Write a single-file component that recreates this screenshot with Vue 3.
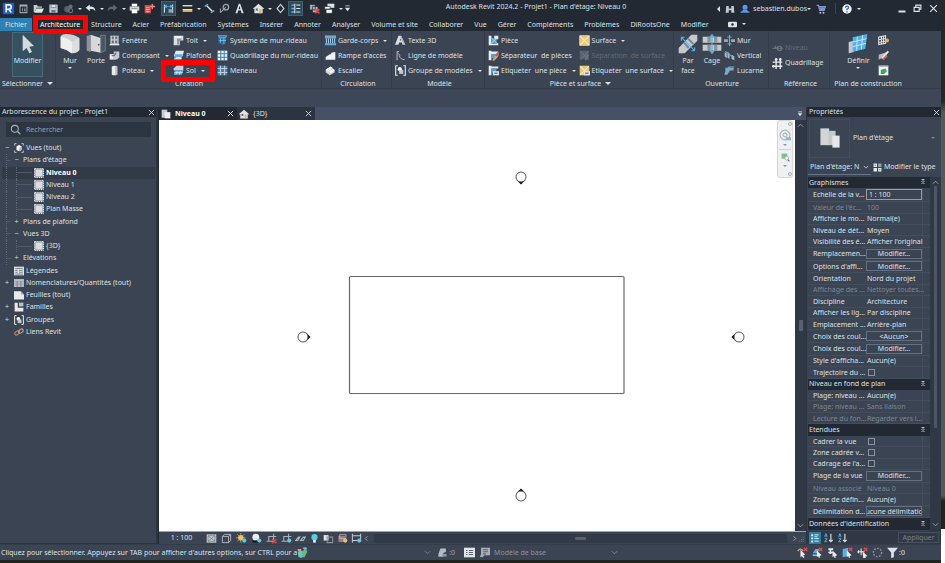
<script setup>
import { h, ref } from 'vue'

const glyphs = {
  logo: '<rect x="1" y="1" width="14" height="14" rx="1" fill="#1a5fd0"/><path d="M5.2 13V3.6h3.6q2.6 0 2.6 2.6T8.6 9H5.4M8.4 9l3 4" fill="none" stroke="#fff" stroke-width="2"/>',
  recent: '<path d="M3 3h10v11H3z" fill="none" stroke="#9ba3ad" stroke-width="1.5"/><path d="M3 3h10v2H3zM6 7h1v5H6zM9 7h2v1H9zM9 9h2v3H9z" fill="#aab1ba"/>',
  open: '<path d="M1 3h5l1 2h6v2H5l-2 6H1z" fill="#c9cdd2"/><path d="M5 8h11l-3 6H2z" fill="#dfe2e6"/>',
  save: '<path d="M2 2h11l1 1v11H2z" fill="#c3c8ce"/><path d="M4 2h8v5H4zM5 10h6v4H5z" fill="#6d7682"/><path d="M5 3h6v3H5z" fill="#dfe2e6"/>',
  sync: '<path d="M2 6l4-2 4 2v6l-4 2-4-2z" fill="#566070"/><circle cx="11" cy="5" r="3" fill="#667080"/><circle cx="11" cy="11" r="3" fill="none" stroke="#667080" stroke-width="1.5"/>',
  undo: '<path d="M1 7l6-5v3c5 0 8 2 8 7-2-3-4-4-8-3v3z" fill="#dfe2e6"/>',
  redo: '<path d="M15 7L9 2v3c-5 0-8 2-8 7 2-3 4-4 8-3v3z" fill="#5d6673"/>',
  print: '<path d="M4 1h8v4H4z" fill="#fff"/><path d="M1 5h14v6H1z" fill="#cfd3d8"/><path d="M4 9h8v6H4z" fill="#fff"/><path d="M4 8h8v1H4z" fill="#59626f"/>',
  pdf: '<path d="M1 3h9v12H1z" fill="#d9534f"/><path d="M11 1h2v3h3v2h-3v3h-2V6H9V4h2z" fill="#f08a86"/><path d="M3 6h5v1H3zM3 9h5v1H3zM3 12h5v1H3z" fill="#f7d9d8"/>',
  measure: '<path d="M2 2v12M14 2v12" stroke="#dfe2e6" stroke-width="1.5"/><path d="M2 5h12M2 5l3-2v4zM14 5l-3-2v4z" stroke="#58b4e8" fill="#58b4e8"/><path d="M8 9h6v5H8z" fill="#9aa2ac"/>',
  dim: '<path d="M1 3h14v2H1z" fill="#dfe2e6"/><path d="M1 9h14v4H1z" fill="#e0b85c"/><path d="M1 9h14v1H1z" fill="#fff"/>',
  line: '<path d="M4 4l8 8" stroke="#dfe2e6" stroke-width="2"/><path d="M1 5l5-3M10 14l5-3" stroke="#58b4e8" stroke-width="2"/>',
  tag: '<circle cx="10" cy="6" r="4" fill="none" stroke="#9ba3ad" stroke-width="1.8"/><path d="M10 6l-8 8M2 8v6" stroke="#9ba3ad" stroke-width="1.5"/>',
  letter: '<path d="M2 15L7 1h2l5 14h-3l-1-4H6l-1 4zM6.7 9h2.6L8 4z" fill="#dfe2e6"/>',
  home: '<path d="M0 8l8-7 8 7-1 1-1-1v7H2V8L1 9z" fill="#dfe2e6"/><path d="M9 9h3v6H9z" fill="#e0b85c"/><path d="M4 8h3v3H4z" fill="#59626f"/>',
  diamond: '<path d="M8 2l5 6-5 6-5-6z" fill="none" stroke="#c3c8ce" stroke-width="1.8"/>',
  thin: '<path d="M2 3h5M2 8h5M2 13h5" stroke="#58b4e8" stroke-width="2"/><path d="M9 3h6M9 8h6M9 13h6M7 1v14" stroke="#dfe2e6" stroke-width="1.5"/>',
  closeWin: '<path d="M1 2h8v8H1zM5 5h8v9H5z" fill="#aab1ba" stroke="#222933"/><path d="M9 9l6 6M15 9l-6 6" stroke="#e8484c" stroke-width="2.4"/>',
  windows: '<path d="M5 1h10v6H5z" fill="#dfe2e6"/><path d="M1 5h8v4H1zM3 9h9v6H3z" fill="#fff" stroke="#222933"/>',
  custom: '<path d="M3 1h10v2H3zM2 6h12l-6 8z" fill="#dfe2e6"/>',
  binocs: '<path d="M2 3h4v4h4V3h4l1 11h-5v-4H6v4H1z" fill="#c3c8ce"/>',
  user: '<circle cx="8" cy="5" r="4" fill="#5c96e8"/><path d="M4 9h8v2l3 1v2H1v-2l3-1z" fill="#5c96e8"/>',
  cart: '<path d="M1 2h3l2 8h7l2-6H5" fill="none" stroke="#8394cf" stroke-width="2"/><path d="M6 5h8l-1 5H7z" fill="#8394cf"/><circle cx="7" cy="14" r="1.5" fill="#c3c8ce"/><circle cx="12" cy="14" r="1.5" fill="#c3c8ce"/>',
  help: '<circle cx="8" cy="8" r="7.5" fill="#f2f4f6"/><path d="M5.5 6q0-2.5 2.5-2.5T10.5 6Q10.500 7.500 8 8.300V10M8 11.400v2" fill="none" stroke="#2a62b4" stroke-width="2"/>',
  min: '<path d="M1 11h14v4H1z" fill="#dfe2e6"/>',
  restore: '<path d="M5 5V2h9v7h-3M2 6h9v7H2z" fill="none" stroke="#dfe2e6" stroke-width="2"/>',
  x: '<path d="M2 2l12 12M14 2L2 14" stroke="currentColor" stroke-width="2"/>',
  cursor: '<path d="M7 1l17 17-7 1 4 8-4 2-4-8-6 5z" fill="#d5d8dc"/>',
  wall: '<path d="M1 3Q3 0 9 0q12 0 20 6v18q-4 5-12 5Q10 23 1 21z" fill="#cdd0d3"/><path d="M1 4q10 1 17 8v17q-7-6-17-8z" fill="#efefef"/><path d="M18 12l11-6v18q-4 5-11 5z" fill="#dcdee0"/>',
  door: '<path d="M1 3l6-2v26l-6-2z" fill="#8b929b"/><path d="M7 1l15 5v22L7 25z" fill="#d7d9db"/><path d="M22 2h7v23l-7 3z" fill="#4b5563" stroke="#8b929b"/><circle cx="19" cy="16" r="1.300" fill="#555"/>',
  window: '<path d="M2 1h12v12H2z" fill="#cdd1d6"/><path d="M4 2h3v4H4zM9 2h3v4H9zM4 8h3v4H4zM9 8h3v4H9z" fill="#66707d"/><path d="M1 13h14v2H1z" fill="#e8eaec"/>',
  component: '<path d="M1 6h6v8H1z" fill="#e8eaec"/><path d="M7 2h8v9q-3 4-8 3z" fill="#c3c8ce"/><path d="M4 8q4 2 6-4" fill="none" stroke="#59626f" stroke-width="1.5"/>',
  column: '<path d="M4 2q4-2 8 0v12q-4 2-8 0z" fill="#e8eaec"/><path d="M9 1l3 1v12l-3 1z" fill="#bcc1c7"/>',
  roof: '<path d="M1 1h14v7h-5v7H1z" fill="#d9dce0"/><path d="M6 5h6v4H9v5H6z" fill="#8d959f"/><path d="M3 3h9" stroke="#fff" stroke-width="2"/>',
  ceiling: '<path d="M4 1h12l-2 8H1z" fill="#e8eaec"/><path d="M3 6h11l-2 8H1z" fill="#58aee6"/><path d="M5 10h6l2 3H3z" fill="#dfe9f0"/>',
  floor: '<path d="M5 1h10v7H1V5z" fill="#cdd1d6"/><path d="M3 8h12l-2 6H1z" fill="#58aee6"/><path d="M6 9l-2 5M11 9l-2 5M2 11h12" stroke="#e8f3fa"/>',
  curtain: '<path d="M2 1h12l-1 11-5 3-6-4z" fill="#2e6da4"/><path d="M2 1h12l-2 3H4zM5 5v6M10 4v9M3 8h10" stroke="#8fc9ee" fill="none"/>',
  grid: '<path d="M1 1h14v14H1z" fill="#f0f2f4"/><path d="M5.500 0v16M10.500 0v16M0 5.500h16M0 10.500h16" stroke="#3a7fb5" stroke-width="1.5"/>',
  mullion: '<path d="M1 1h14v14H1z" fill="#3c86bd"/><path d="M5 1v14M11 1v14M1 5h14M1 11h14" stroke="#c6cbd1" stroke-width="1.500"/>',
  railing: '<path d="M0 2h16v3H0zM0 12h16v3H0z" fill="#58aee6"/><path d="M2 5v7M5 5v7M8 5v7M11 5v7M14 5v7" stroke="#a9cfe9" stroke-width="1.5"/><path d="M0 1h16v1H0z" fill="#e8f3fa"/>',
  ramp: '<path d="M1 10l6-4h2V4l6-1v11H1z" fill="#f0f2f4"/>',
  stair: '<path d="M1 7l7-5 6 5v4l-7 4-6-4z" fill="#cfd3d8"/><path d="M1 7l7-5 3 2-6 5zM6 9l5-3 3 2-6 4z" fill="#fff"/>',
  text3d: '<path d="M0 14L5 1h4l6 13h-4l-1-3H6l-1 3zM7 8h2L8 5z" fill="#d9dce0"/><path d="M9 1l6 13h-2L8 3z" fill="#a4abb4"/>',
  modelLine: '<path d="M3 2v11M2 14h2M3 3l3-1M6 8q2 6 8 6M5 5l2 3" fill="none" stroke="#c3c8ce" stroke-width="1.300"/>',
  group: '<path d="M4 1H1v14h3M12 1h3v14h-3" fill="none" stroke="#e8eaec" stroke-width="1.6"/><circle cx="7" cy="6" r="3" fill="#fff"/><path d="M6 7h6v6H6z" fill="#c3c8ce"/>',
  room: '<path d="M1 1h4v14H1zM9 1h6v5H9zM5 12h10v3H5z" fill="#e8eaec"/><path d="M5 4l8 2-1 7H5z" fill="#4aa3df"/><path d="M5 4l8 8M12 5l-7 7" stroke="#d4ebf8"/>',
  roomSep: '<path d="M1 1h4v14H1zM5 2h10v4H5z" fill="#e8eaec"/><path d="M5 6h9v6H5z" fill="#4aa3df"/><path d="M13 5l3 2-6 8-3 1v-3z" fill="#e8a04c"/><path d="M10 8l4-5 2 2-3 4z" fill="#e8484c"/>',
  roomTag: '<path d="M1 1h4v14H1zM5 2h10v3H5z" fill="#e8eaec"/><path d="M5 5h8l-2 6H5z" fill="#4aa3df"/><path d="M7 9h9v6H7z" fill="#dfe2e6"/><path d="M9 11h5v2H9z" fill="#6d7682"/>',
  area: '<path d="M1 1h14v14H1z" fill="#efc46c"/><path d="M2 2l12 12M14 2L2 14" stroke="#fff2d4" stroke-width="1.5"/><path d="M1 1h14v14H1z" fill="none" stroke="#fff2d4"/>',
  areaSep: '<path d="M1 1h13v12H1z" fill="#565f6d"/><path d="M2 2l12 12M14 2L2 14" stroke="#6a7380" stroke-width="1.500"/><path d="M11 7h4l-4 8H8z" fill="#69727f"/>',
  areaTag: '<path d="M1 1h14v14H1z" fill="#efc46c"/><path d="M2 2l12 12M14 2L2 14" stroke="#fff2d4" stroke-width="1.500"/><path d="M7 9h9v6H7z" fill="#dfe2e6"/><path d="M9 11h5v2H9z" fill="#6d7682"/>',
  byFace: '<path d="M1 21L20 1h9v9L10 29H1z" fill="#c6cacf"/><path d="M9 13l7 8M15 7l8 8" stroke="#7c8591" stroke-width="3"/><path d="M5 5l20 20M5 5h5M5 5v5M25 25h-5M25 25v-5" stroke="#58b4e8" stroke-width="1.6"/>',
  shaft: '<path d="M1 4h28v9H1zM1 16h28v9H1z" fill="#c6cacf"/><path d="M8 4h5v9H8zM18 4h5v9h-5zM8 16h5v9H8zM18 16h5v9h-5z" fill="#8b929b"/><path d="M15 1v28M12 5l3-4 3 4M12 25l3 4 3-4" fill="none" stroke="#58b4e8" stroke-width="1.8"/>',
  openWall: '<path d="M0 6h6v4H0zM10 6h6v4h-6z" fill="#9aa2ac"/><path d="M8 0v16M5 3h6M5 13h6" stroke="#58b4e8" stroke-width="1.4"/>',
  vertical: '<path d="M1 3l3 2v7L1 9zM5 2l3 3v8l-3-2zM11 7l4 2v6l-4-2z" fill="#b4bac2"/><path d="M2 2l12 9" stroke="#58b4e8" stroke-width="1.5"/>',
  dormer: '<path d="M2 4h12v4H8l-3 6H2z" fill="#9aa2ac"/><path d="M1 14L7 3h8M7 3v8" fill="none" stroke="#58b4e8" stroke-width="1.6"/>',
  level: '<circle cx="11" cy="8" r="3" fill="none" stroke="#69727f" stroke-width="2"/><path d="M0 8h16M3 8l2-4 2 4z" stroke="#69727f" fill="#69727f"/>',
  axes: '<path d="M6 2v14M12 2v14M1 6h14M1 12h14" stroke="#e8eaec" stroke-width="2"/><circle cx="6" cy="2" r="2" fill="#e8eaec"/><circle cx="12" cy="2" r="2" fill="#e8eaec"/><circle cx="2" cy="12" r="2" fill="#e8eaec"/>',
  workplane: '<path d="M1 12l8-2v17l-8 2z" fill="#c6cacf"/><path d="M7 5l22-5-3 22-19 5z" fill="#4fb0ea"/><path d="M14 4l-1 21M22 2l-2 21M7 12l21-5M7 19l20-5" stroke="#c8e8fa" stroke-width="1.5"/>',
  wpShow: '<path d="M1 3l10-2v11L1 14zM5 2v11M8 2v11M1 7l10-2M1 11l10-2" fill="none" stroke="#dfe2e6" stroke-width="1.5"/><circle cx="13" cy="8" r="3" fill="#efb04c"/>',
  wpRef: '<path d="M1 7l12-4-3 6-9 5z" fill="#b4bac2"/><path d="M14 1l2 2-8 9-3 1 1-3z" fill="#e8eaec"/><path d="M6 13l6-6 2 2-6 6z" fill="#d6665e"/>',
  wpView: '<path d="M1 1h14v14H1z" fill="#f3f5f4"/><path d="M1 1h14v2H1z" fill="#b4bac2"/><path d="M4 7l7-2 2 4-4 4H4z" fill="#39a860"/>',
  search: '<circle cx="7" cy="7" r="5" fill="none" stroke="#aab1ba" stroke-width="1.5"/><path d="M11 11l4 4" stroke="#aab1ba" stroke-width="1.8"/>',
  views: '<path d="M1 4V1h3M12 1h3v3M15 12v3h-3M4 15H1v-3" fill="none" stroke="#c3c8ce" stroke-width="1.5"/><path d="M4 5l4-2 4 2v6l-4 2-4-2z" fill="#fff"/><path d="M8 7l4-2v6l-4 2z" fill="#bcc1c7"/>',
  plan: '<path d="M2 2h12v12H2z" fill="#d9dce0"/><path d="M1 1h14v14H1z" fill="none" stroke="#fff" stroke-width="1.6" stroke-dasharray="2 1"/>',
  legend: '<path d="M0 1h16v14H0z" fill="#d9dce0"/><path d="M2 4h12M2 7h4M8 7h6M2 10h4M8 10h6M2 13h12" stroke="#6d7682" stroke-width="1.300"/>',
  schedule: '<path d="M0 2h16v12H0z" fill="#d9dce0"/><path d="M0 5h16M0 8h16M0 11h16M5 5v9M11 5v9" stroke="#59626f"/>',
  sheet: '<path d="M0 2h11l5 5v8H0z" fill="#e8e9eb"/><path d="M11 2v5h5z" fill="#a4abb4"/>',
  family: '<path d="M1 1h5v8h9v6H1z" fill="#e8e9eb"/><path d="M8 1h7v6H8z" fill="#bcc1c7"/>',
  link: '<rect x="1" y="7" width="8" height="5" rx="2.500" transform="rotate(-35 5 9.500)" fill="none" stroke="#d08a5a" stroke-width="1.6"/><rect x="7" y="4" width="8" height="5" rx="2.500" transform="rotate(-35 11 6.500)" fill="none" stroke="#dca27a" stroke-width="1.6"/>',
  sheets: '<path d="M1 1h9v13H1z" fill="#c9cbcf"/><path d="M6 5h9v10H6z" fill="#eceded"/>',
  planBig: '<path d="M3 3h11v21H3z" fill="#d3d5d7"/><path d="M13 6h9v18h-9z" fill="#c6c8cb"/><path d="M18 12h9v15h-9z" fill="#e6e7e8"/>',
  typeEdit: '<path d="M1 1h6v6H1zM1 9h6v6H1zM9 9h6v6H9z" fill="#e8eaec"/><path d="M9 1h6v6H9z" fill="#9aa2ac"/><path d="M3 3h2v2H3zM11 11h2v2h-2z" fill="#59626f"/>',
  wheel: '<circle cx="8" cy="8" r="6.500" fill="none" stroke="#a9b3c0" stroke-width="1.600"/><circle cx="8" cy="8" r="2.500" fill="none" stroke="#a9b3c0" stroke-width="1.500"/><path d="M9 11h7v4H9z" fill="#8fb4da"/>',
  zoomRegion: '<path d="M1 1h10v9H1z" fill="#7fbf86"/><circle cx="10" cy="9" r="3.500" fill="#e9f3ea" stroke="#8a939e"/><path d="M12 12l3 3" stroke="#6b7480" stroke-width="2"/>',
  detail: '<path d="M1 2h14v12H1z" fill="#c9cdd2"/><path d="M3 4h10v8H3zM3 4l10 8M13 4L3 12" fill="none" stroke="#6d7682"/>',
  cube: '<path d="M2 5h9v9H2zM2 5l3-3h9v9l-3 3M11 5l3-3" fill="none" stroke="#b4bac2" stroke-width="1.300"/>',
  sun: '<circle cx="7" cy="7" r="4" fill="#f0bd62"/><path d="M7 0v14M0 7h14M2 2l10 10M12 2L2 12" stroke="#f0bd62"/><circle cx="12" cy="11" r="3" fill="#56cfe0"/>',
  shadow: '<circle cx="7" cy="6" r="5" fill="#eceded"/><path d="M2 11h10v3H2z" fill="#16191e"/><circle cx="12" cy="11" r="3" fill="#56cfe0"/>',
  cropOff: '<path d="M4 12V5h11M1 12h10V1" fill="none" stroke="#a9b0b9" stroke-width="1.6"/><path d="M9 9l6 6M15 9l-6 6" stroke="#e8484c" stroke-width="2"/>',
  crop: '<path d="M4 12V5h11M1 12h10V1" fill="none" stroke="#a9b0b9" stroke-width="1.6"/><circle cx="12" cy="11" r="3" fill="#56cfe0"/>',
  glasses: '<path d="M1 11l4-5h2l-3 5zM8 11l4-5h3l-3 5z" fill="none" stroke="#b4bac2" stroke-width="1.6"/>',
  bulb: '<circle cx="8" cy="6" r="4.500" fill="#56cfe0"/><path d="M6 10h4v4H6z" fill="#e8eaec"/>',
  copy: '<path d="M1 3h7v8H1z" fill="#dfe2e6"/><path d="M6 6h8v8H6z" fill="none" stroke="#8b929b" stroke-width="1.500"/>',
  analysis: '<path d="M2 4h10v9H2z" fill="#a07b80"/><path d="M4 2h9v6H4z" fill="none" stroke="#c3c8ce"/><circle cx="12" cy="11" r="3" fill="#f0bd62"/>',
  constraint: '<path d="M2 1v13M14 1v8M2 4h12M2 11h7" stroke="#c3c8ce" stroke-width="1.500"/><circle cx="12" cy="11" r="3" fill="#56cfe0"/>',
  left: '<path d="M10 3L5 8l5 5" fill="none" stroke="currentColor" stroke-width="2"/>',
  right: '<path d="M6 3l5 5-5 5" fill="none" stroke="currentColor" stroke-width="2"/>',
  up: '<path d="M2 11l6-6 6 6" fill="none" stroke="currentColor" stroke-width="2"/>',
  down: '<path d="M2 5l6 6 6-6" fill="none" stroke="currentColor" stroke-width="2"/>',
  pin: '<path d="M5 8l3-3 3 3M5 12l3-3 3 3M5 3h6" fill="none" stroke="#dfe2e6" stroke-width="1.6"/>',
  grip: '<path d="M11 5h2v2h-2zM7 9h2v2H7zM11 9h2v2h-2zM3 13h2v2H3zM7 13h2v2H7zM11 13h2v2h-2z" fill="#8b929b"/>',
  press: '<path d="M1 7l5-2 3 2v7l-3 2-4-2z" fill="#58c9d8"/><path d="M7 6l6-3 2 4-4 8H8z" fill="#6cb678"/><path d="M1 3h5v3H1z" fill="#e09b7b"/><path d="M8 1l5-1 2 3-4 2z" fill="#73a8e8"/>',
  workset: '<path d="M5 2h8v5l-4 2v5H2v-4z" fill="#b4bac2"/><path d="M8 10h6v4H8z" fill="#8b929b"/>',
  list: '<path d="M0 1h16v14H0z" fill="#e3e5e8"/><path d="M3 5h2M3 8h2M3 11h2M7 5h6M7 8h6M7 11h6" stroke="#59626f" stroke-width="1.500"/>',
  listFar: '<path d="M3 1h13v11H8l-3 3-4-1 2-3z" fill="#a9b0b9"/><path d="M6 4h7M6 7h7M6 10h4" stroke="#59626f" stroke-width="1.500"/>',
  selLink: '<path d="M1 6q4-6 8 0" fill="none" stroke="#d89a72" stroke-width="2"/><path d="M5 4l7 7-3 1 2 3-2 1-2-3-2 2z" fill="#e8eaec"/><path d="M10 1l5 5M15 1l-5 5" stroke="#e8484c" stroke-width="2"/>',
  selUnder: '<path d="M1 9l4-6h6L8 9z" fill="#58aee6"/><path d="M7 5l7 7-3 1 1 2-2 1-1-3-2 2z" fill="#e8eaec"/><path d="M1 12h6" stroke="#c3c8ce" stroke-width="2"/><path d="M10 1l5 5M15 1l-5 5" stroke="#e8484c" stroke-width="2"/>',
  selPin: '<path d="M2 3h7M5 3v7M2 8h7" stroke="#e8eaec" stroke-width="2.500"/><path d="M8 5l7 7-3 1 1 2-2 1-1-3-2 2z" fill="#e8eaec"/>',
  selFace: '<path d="M1 3l8-2v12l-8 2z" fill="#58aee6"/><path d="M7 5l7 7-3 1 1 2-2 1-1-3-2 2z" fill="#e8eaec"/><path d="M10 1l5 5M15 1l-5 5" stroke="#e8484c" stroke-width="2"/>',
  drag: '<path d="M1 7h10M6 2v10M1 7l2-2M1 7l2 2" stroke="#e8eaec" stroke-width="1.500"/><path d="M8 6l7 7-3 1 1 2H9z" fill="#e8eaec"/><path d="M10 1l5 5M15 1l-5 5" stroke="#e8484c" stroke-width="2"/>',
  busy: '<circle cx="8" cy="8" r="6" fill="none" stroke="#8b929b" stroke-width="2" stroke-dasharray="2.500 2"/>',
  filter: '<path d="M0 1h16l-6 7v7l-4 1V8z" fill="#dfe2e6"/>',
  sortA: '<path d="M1 6l2-5 2 5M2 5h2M1 9h4l-4 5h4" stroke="#58b4e8" stroke-width="1.500" fill="none"/><path d="M11 1v13M8 11l3 3 3-3" stroke="#dfe2e6" stroke-width="1.800" fill="none"/>',
  categories: '<path d="M2 2h3v3H2zM2 7h3v3H2zM2 12h3v3H2z" fill="#dff1fa"/><path d="M7 3h7M7 6h5M7 9h7M7 13h7" stroke="#dff1fa" stroke-width="1.500"/>',
  pill: '<rect x="0" y="3" width="16" height="10" rx="2" fill="#dfe2e6"/><circle cx="8" cy="8" r="2.200" fill="#222933"/>'
}
const Ico = (p) => h('svg', {
  viewBox: p.big ? '0 0 30 30' : '0 0 16 16', 'aria-hidden': 'true', innerHTML: glyphs[p.n]
})
Ico.props = { n: String, big: Boolean }

const quick = ['logo', 'recent', 'open', 'save', 'sync', 'v', 'undo', 'v', 'redo', 'v', 'print', 'pdf', '|', '*measure', '|',
  'dim', 'v', 'line', 'tag', 'letter', '|', 'home', 'v', 'diamond', '*thin', '|', 'closeWin', 'windows', 'v']
const tabs = ['Architecture', 'Structure', 'Acier', 'Préfabrication', 'Systèmes', 'Insérer', 'Annoter', 'Analyser',
  'Volume et site', 'Collaborer', 'Vue', 'Gérer', 'Compléments', 'Problèmes', 'DiRootsOne', 'Modifier']

const t = (icon, text, menu = false, off = false) => ({ icon, text, menu, off })
const panels = [
  { cls: 'select', title: 'Sélectionner', more: true, big: [{ icon: 'cursor', text: 'Modifier', on: true }], cols: [] },
  { cls: 'create', title: 'Création', big: [{ icon: 'wall', text: 'Mur', menu: true }, { icon: 'door', text: 'Porte' }],
    cols: [
      [t('window', 'Fenêtre'), t('component', 'Composant', true), t('column', 'Poteau', true)],
      [t('roof', 'Toit', true), t('ceiling', 'Plafond'), t('floor', 'Sol', true)],
      [t('curtain', 'Système de mur-rideau'), t('grid', 'Quadrillage du mur-rideau'), t('mullion', 'Meneau')]] },
  { cls: 'circ', title: 'Circulation', big: [],
    cols: [[t('railing', 'Garde-corps', true), t('ramp', "Rampe d'accès"), t('stair', 'Escalier')]] },
  { cls: 'model', title: 'Modèle', big: [],
    cols: [[t('text3d', 'Texte 3D'), t('modelLine', 'Ligne de modèle'), t('group', 'Groupe de modèles', true)]] },
  { cls: 'rooms', title: 'Pièce et surface', more: true, big: [],
    cols: [
      [t('room', 'Pièce'), t('roomSep', 'Séparateur  de pièces'), t('roomTag', 'Etiqueter  une pièce', true)],
      [t('area', 'Surface', true), t('areaSep', 'Séparation  de surface', false, true), t('areaTag', 'Etiqueter  une surface', true)]] },
  { cls: 'opening', title: 'Ouverture', big: [{ icon: 'byFace', text: 'Par face' }, { icon: 'shaft', text: 'Cage' }],
    cols: [[t('openWall', 'Mur'), t('vertical', 'Vertical'), t('dormer', 'Lucarne')]] },
  { cls: 'datum', title: 'Référence', big: [], cols: [[t('level', 'Niveau', false, true), t('axes', 'Quadrillage')]] },
  { cls: 'wplane', title: 'Plan de construction', big: [{ icon: 'workplane', text: 'Définir', menu: true }],
    cols: [[t('wpShow', ''), t('wpRef', ''), t('wpView', '')]] }
]

const tree = [
  { lv: 1, sign: '−', icon: 'views', text: 'Vues (tout)' },
  { lv: 2, sign: '−', text: "Plans d'étage" },
  { lv: 3, icon: 'plan', text: 'Niveau 0', on: true },
  { lv: 3, icon: 'plan', text: 'Niveau 1' },
  { lv: 3, icon: 'plan', text: 'Niveau 2' },
  { lv: 3, icon: 'plan', text: 'Plan Masse' },
  { lv: 2, sign: '+', text: 'Plans de plafond' },
  { lv: 2, sign: '−', text: 'Vues 3D' },
  { lv: 3, icon: 'plan', text: '{3D}' },
  { lv: 2, sign: '+', text: 'Elévations' },
  { lv: 1, icon: 'legend', text: 'Légendes' },
  { lv: 1, sign: '+', icon: 'schedule', text: 'Nomenclatures/Quantités (tout)' },
  { lv: 1, icon: 'sheet', text: 'Feuilles (tout)' },
  { lv: 1, sign: '+', icon: 'family', text: 'Familles' },
  { lv: 1, sign: '+', icon: 'group', text: 'Groupes' },
  { lv: 1, icon: 'link', text: 'Liens Revit' }
]

const props = [
  { head: 'Graphismes' },
  { k: 'Echelle de la v...', v: '1 : 100', type: 'input' },
  { k: "Valeur de l'éc...", v: '100', off: true },
  { k: 'Afficher le mo...', v: 'Normal(e)' },
  { k: 'Niveau de dét...', v: 'Moyen' },
  { k: 'Visibilité des é...', v: "Afficher l'original" },
  { k: 'Remplacemen...', v: 'Modifier...', type: 'button' },
  { k: "Options d'affi...", v: 'Modifier...', type: 'button' },
  { k: 'Orientation', v: 'Nord du projet' },
  { k: 'Affichage des ...', v: 'Nettoyer toutes...', off: true },
  { k: 'Discipline', v: 'Architecture' },
  { k: 'Afficher les lig...', v: 'Par discipline' },
  { k: 'Emplacement ...', v: 'Arrière-plan' },
  { k: 'Choix des coul...', v: '<Aucun>', type: 'button' },
  { k: 'Choix des coul...', v: 'Modifier...', type: 'button' },
  { k: "Style d'afficha...", v: 'Aucun(e)' },
  { k: 'Trajectoire du ...', type: 'check' },
  { head: 'Niveau en fond de plan' },
  { k: 'Plage: niveau ...', v: 'Aucun(e)' },
  { k: 'Plage: niveau ...', v: 'Sans liaison', off: true },
  { k: 'Lecture du fon...', v: 'Regarder vers l...', off: true },
  { head: 'Etendues' },
  { k: 'Cadrer la vue', type: 'check' },
  { k: 'Zone cadrée v...', type: 'check' },
  { k: "Cadrage de l'a...", type: 'check' },
  { k: 'Plage de la vue', v: 'Modifier...', type: 'button' },
  { k: 'Niveau associé', v: 'Niveau 0', off: true },
  { k: 'Zone de défin...', v: 'Aucun(e)' },
  { k: 'Délimitation d...', v: 'Aucune délimitation', type: 'button' },
  { head: "Données d'identification" }
]
const viewIcons = ['detail', 'cube', 'sun', 'shadow', 'cropOff', 'crop', 'glasses', 'bulb', 'copy', 'analysis', 'constraint']
const selIcons = ['selLink', 'selUnder', 'selPin', 'selFace', 'drag', 'busy']
const query = ref('')
</script>

<template>
  <div class="app">
    <header class="titlebar">
      <div class="quick">
        <template v-for="(q, i) in quick" :key="i">
          <i v-if="q === 'v'" class="slot-arrow"><b class="caret" /></i>
          <i v-else-if="q === '|'" class="slot-gap" />
          <button v-else class="slot" :class="{ pressed: q[0] === '*' }"><Ico :n="q.replace('*', '')" :class="q === 'logo' ? 'i13' : 'i11'" /></button>
        </template>
        <button class="slot-arrow"><Ico n="custom" class="i7" /></button>
      </div>
      <h1>Autodesk Revit 2024.2 - Projet1 - Plan d'étage: Niveau 0</h1>
      <div class="account">
        <b class="caret back" />
        <button><Ico n="binocs" class="i10" /></button>
        <button class="user"><Ico n="user" class="i10" />sebastien.dubos<b class="caret" /></button>
        <button><Ico n="cart" class="i10" /></button>
        <i class="rule" />
        <button><Ico n="help" class="i10" /></button>
        <b class="caret" />
      </div>
      <div class="wincontrols">
        <button><Ico n="min" class="i8" /></button>
        <button><Ico n="restore" class="i9" /></button>
        <button><Ico n="x" class="i9" /></button>
      </div>
    </header>

    <nav class="tabs">
      <a href="#" class="file">Fichier</a>
      <a v-for="(name, i) in tabs" :key="name" href="#" :class="{ current: i === 0 }">{{ name }}<i v-if="i === 0" class="mark mark-tab" /></a>
      <button class="pillbtn"><Ico n="pill" class="i9" /><b class="caret" /></button>
    </nav>

    <section class="ribbon">
      <div v-for="p in panels" :key="p.title" class="panel" :class="p.cls">
        <div class="tools">
          <button v-for="b in p.big" :key="b.text" class="big" :class="{ on: b.on }">
            <Ico :n="b.icon" :big="true" class="i20" /><span>{{ b.text }}</span><b v-if="b.menu" class="caret" />
          </button>
          <div v-for="(c, ci) in p.cols" :key="ci" class="col">
            <button v-for="b in c" :key="b.icon" class="tool" :class="{ off: b.off }" :disabled="b.off">
              <Ico :n="b.icon" class="i11" /><span v-if="b.text">{{ b.text }}</span><b v-if="b.menu" class="caret" />
              <i v-if="b.icon === 'floor'" class="mark mark-tool" />
            </button>
          </div>
        </div>
        <div class="ptitle">{{ p.title }}<b v-if="p.more" class="caret wide" /></div>
      </div>
    </section>

    <main class="work">
      <aside class="browser">
        <div class="bar"><h2>Arborescence du projet - Projet1</h2><button><Ico n="x" class="i7" /></button></div>
        <label class="search"><Ico n="search" class="i11" /><input v-model="query" type="text" placeholder="Rechercher" aria-label="Rechercher"></label>
        <ul class="tree">
          <li v-for="(r, i) in tree" :key="i" :class="['lv' + r.lv, { on: r.on }]">
            <i v-if="r.lv > 1" class="guide" :class="{ plain: r.lv === 3 }" />
            <i v-if="r.lv === 3" class="guide deep" />
            <span v-if="r.lv < 3" class="sign">{{ r.sign }}</span>
            <Ico v-if="r.icon" :n="r.icon" class="i10" />
            <span>{{ r.text }}</span>
          </li>
        </ul>
      </aside>

      <section class="center">
        <div class="doctabs">
          <div class="doctab active"><Ico n="sheets" class="i10" /><span>Niveau 0</span><button><Ico n="x" class="i7" /></button></div>
          <div class="doctab"><Ico n="home" class="i10" /><span>{3D}</span><button><Ico n="x" class="i7" /></button></div>
          <button class="tabmenu"><Ico n="custom" class="i6" /></button>
        </div>
        <div class="viewport">
          <div class="canvas">
            <svg viewBox="0 0 636 411" class="drawing">
              <rect x="190.500" y="156.500" width="274.500" height="117" rx="1" fill="none" stroke="#686868" stroke-width="1.200" />
              <g v-for="m in [[362, 57, 0], [144, 217, -90], [580, 217, 90], [362, 376, 180]]" :key="m.join()" :transform="`translate(${m[0]} ${m[1]}) rotate(${m[2]})`">
                <path d="M-4.500 3L0 7.500L4.500 3z" fill="#000" />
                <circle r="5" fill="#fff" stroke="#555" />
              </g>
            </svg>
            <div class="navbar">
              <i class="dot" /><Ico n="wheel" class="i12" /><b class="caret" /><hr><Ico n="zoomRegion" class="i9" /><b class="caret" /><i class="dot last" />
            </div>
          </div>
          <div class="vscroll"><Ico n="up" class="i7" /><i class="thumb" /><Ico n="down" class="i7" /></div>
        </div>
        <div class="viewbar">
          <button class="scale">1 : 100</button>
          <button v-for="v in viewIcons" :key="v" class="vbtn"><Ico :n="v" class="i11" /></button>
          <Ico n="left" class="i7" />
          <div class="hscroll"><i class="thumb flat" /></div>
          <Ico n="right" class="i7" />
          <Ico n="grip" class="i7" />
        </div>
      </section>

      <aside class="properties">
        <div class="bar"><h2>Propriétés</h2><button><Ico n="x" class="i7" /></button></div>
        <div class="ptype"><div class="thumbbox"><Ico n="planBig" :big="true" class="i22" /></div><span>Plan d'étage</span><b class="caret dim" /></div>
        <div class="pinst">
          <button class="inst">Plan d'étage: N<Ico n="down" class="i6" /></button>
          <button class="edit"><Ico n="typeEdit" class="i9" />Modifier le type</button>
        </div>
        <div class="pbody">
          <table>
            <colgroup><col class="ck"><col class="cv"><col class="ct"></colgroup>
            <tbody>
              <tr v-for="(r, i) in props" :key="i" :class="{ off: r.off }">
                <template v-if="r.head"><th colspan="2">{{ r.head }}</th><th><Ico n="pin" class="i8" /></th></template>
                <template v-else>
                  <td class="key"><label :for="'p' + i">{{ r.k }}</label></td>
                  <td class="val">
                    <input v-if="r.type === 'input'" :id="'p' + i" type="text" :value="r.v">
                    <button v-else-if="r.type === 'button'" :id="'p' + i"><span>{{ r.v }}</span></button>
                    <input v-else-if="r.type === 'check'" :id="'p' + i" type="checkbox">
                    <output v-else :id="'p' + i">{{ r.v }}</output>
                  </td>
                  <td />
                </template>
              </tr>
            </tbody>
          </table>
          <div class="pscroll"><Ico n="up" class="i7" /><i class="track" /><Ico n="down" class="i7" /></div>
        </div>
        <div class="pfoot">
          <button class="sort on"><Ico n="categories" class="i10" /></button>
          <button class="sort"><Ico n="sortA" class="i10" /></button>
          <button class="sort"><Ico n="sortA" class="i10" /></button>
          <button class="apply" disabled>Appliquer</button>
        </div>
      </aside>
    </main>

    <footer class="status">
      <span class="hint">Cliquez pour sélectionner. Appuyez sur TAB pour afficher d'autres options, sur CTRL pour a</span>
      <Ico n="press" class="i11" />
      <div class="worksets"><Ico n="down" class="i7" /></div>
      <button class="count"><Ico n="workset" class="i11" />:0</button>
      <button class="lists"><Ico n="list" class="i11" /></button>
      <button class="lists"><Ico n="listFar" class="i11" /></button>
      <div class="options">
        <select aria-label="Variante"><option>Modèle de base</option></select><Ico n="down" class="i7" />
      </div>
      <div class="selection">
        <button v-for="s in selIcons" :key="s"><Ico :n="s" class="i11" /></button>
        <button class="count lit"><Ico n="filter" class="i11" />:0</button>
      </div>
    </footer>
  </div>
</template>

<style>
body { margin: 0; background: #20241f; }
</style>

<style scoped>
.app {
  box-sizing: border-box; min-height: 100vh; display: flex; flex-direction: column; padding: 0 4px 3px 0;
  font: 7px/10px "Noto Sans", "Open Sans", sans-serif; color: #dde0e5;
  background: linear-gradient(#252729 18%, #55585a 20%, #55585a 88%, #20241f 89%, #20241f 94%, #fff 94%) right / 4px 100% no-repeat, #20241f;
}
.app * { box-sizing: border-box; }
button, input, select { font: inherit; color: inherit; background: none; border: 0; padding: 0; margin: 0; }
button { display: flex; align-items: center; justify-content: center; white-space: nowrap; }
a { color: inherit; text-decoration: none; }
h1, h2 { font: inherit; margin: 0; white-space: nowrap; }
svg { flex: none; display: block; }
.i6 { width: 6px; height: 6px; }
.i7 { width: 7px; height: 7px; }
.i8 { width: 8px; height: 8px; }
.i9 { width: 9px; height: 9px; }
.i10 { width: 10px; height: 10px; }
.i11 { width: 11px; height: 11px; }
.i12 { width: 12px; height: 12px; }
.i13 { width: 13px; height: 13px; }
.i20 { width: 20px; height: 20px; }
.i22 { width: 24px; height: 24px; }
.caret { display: block; flex: none; border: 2px solid transparent; border-top-color: currentColor; border-bottom: 0; }
.caret.wide { border-width: 3px 3px 0; }
.caret.back { border: 3px solid transparent; border-right-color: currentColor; border-left: 0; }
.caret.dim { color: #7d8794; }

.titlebar { display: flex; align-items: center; height: 17px; background: #222933; }
.quick { display: flex; align-items: center; padding-left: 1px; }
.slot { width: 15px; height: 15px; }
.slot.pressed { background: #2c4a5c; border: 1px solid #3d6175; }
.slot-arrow { width: 7px; display: flex; justify-content: center; }
.slot-gap { width: 4px; }
.titlebar h1 { flex: 1; text-align: center; line-height: 12px; padding: 0 0 3px 4px; }
.account { display: flex; align-items: center; gap: 5px; }
.user { gap: 3px; }
.user .caret { margin-left: -3px; }
.rule { width: 1px; height: 11px; background: #3b4453; margin: 0 1px 0 4px; }
.wincontrols { display: flex; align-items: center; gap: 7px; padding: 0 3px 0 37px; }

.tabs { display: flex; align-items: center; gap: 11px; height: 14px; background: #222933; }
.tabs a { position: relative; line-height: 13px; white-space: nowrap; }
.tabs .file { background: #2d80b4; width: 32px; text-align: center; margin-right: -3px; }
.tabs .current { color: #fff; }
.pillbtn { gap: 5px; margin-left: 8px; }
.mark { position: absolute; border: 5px solid #fe0000; z-index: 2; pointer-events: none; }
.mark-tab { inset: -3px -8px -3px -7px; }
.mark-tool { inset: -3px -10px -4px -12px; }

.ribbon { display: flex; height: 58px; background: #3b4453; border-bottom: 1px solid #343c4a; box-shadow: 0 18px 0 #3e4757; margin-bottom: 18px; }
.panel { display: flex; flex-direction: column; justify-content: space-between; padding-top: 1px; border-right: 1px solid #343c4a; }
.tools { display: flex; height: 46px; }
.ptitle { display: flex; justify-content: center; align-items: center; gap: 4px; height: 9px; white-space: nowrap; }
.col { display: flex; flex-direction: column; justify-content: center; padding-top: 1px; }
.tool { position: relative; height: 15px; justify-content: flex-start; gap: 2px; align-self: flex-start; white-space: pre; }
.tool .caret { margin-left: 3px; }
.tool.off { color: #626c7a; }
.big { flex-direction: column; justify-content: flex-start; height: 45px; padding-top: 2px; white-space: normal; }
.big .caret { margin-top: 1px; }
.big span { padding-top: 2px; }
.big.on { background: #35505f; border: 1px solid #48697b; width: 31px; padding-top: 1px; }
.select { width: 56px; }
.select .tools { justify-content: center; }
.create { width: 266px; padding-left: 1px; }
.create .big { width: 26px; }
.create .col:nth-of-type(1) { width: 64px; }
.create .col:nth-of-type(2) { width: 44px; }
.circ { width: 70px; padding-left: 3px; }
.model { width: 93px; padding-left: 3px; }
.rooms { width: 189px; padding-left: 3px; }
.rooms .col:first-child { width: 92px; }
.opening { width: 95px; padding-left: 2px; }
.opening .big { width: 24px; }
.datum { width: 61px; padding-left: 3px; }
.wplane { width: 76px; border: 0; }
.wplane .tools { justify-content: center; gap: 8px; }

.work { flex: 1; display: flex; background: #2c3441; }
.bar { display: flex; align-items: center; justify-content: space-between; height: 10px; background: #222933; padding: 0 1px 0 2px; }
.browser { width: 156px; margin-right: 2px; background: #3b4453; border-bottom: 1px solid #2c3441; }
.search { display: flex; align-items: center; gap: 5px; height: 15px; margin: 5px 5px 0 6px; padding: 0 4px; background: #2d3541; }
.search input { flex: 1; min-width: 0; outline: 0; }
.search input::placeholder { color: #98a0aa; opacity: 1; }
.tree { list-style: none; margin: 5px 1px 0 2px; padding: 0; height: 196px; display: grid; grid-template-rows: repeat(16, 1fr); }
.tree li { display: flex; align-items: center; gap: 2px; white-space: nowrap; }
.tree li.on { background: #323a47; font-weight: 700; color: #fff; }
.sign { width: 10px; text-align: center; font-weight: 700; color: #aeb5be; }
.lv2 .sign { width: 7px; margin-right: 1px; }
.guide { align-self: stretch; width: 5px; margin-left: 4px; border-left: 1px dotted #5d6777; background: linear-gradient(#4f5969, #4f5969) center / 100% 1px no-repeat; }
.guide.plain { background: none; }
.guide.deep { width: 16px; margin-left: 3px; }

.center { flex: 1; min-width: 0; display: flex; flex-direction: column; background: #3b4453; border-left: 1px solid #222933; }
.doctabs { display: flex; height: 13px; background: #475166; }
.doctab { display: flex; align-items: center; gap: 4px; width: 78px; padding: 0 3px 0 2px; background: #2c3441; }
.doctab span { flex: 1; }
.doctab.active { background: #222933; color: #fff; font-weight: 700; }
.tabmenu { margin-left: auto; padding-right: 3px; }
.viewport { flex: 1; display: flex; }
.canvas { position: relative; flex: 1; background: #fff; }
.drawing { width: 100%; height: 100%; }
.navbar { position: absolute; top: 0; right: 2px; width: 16px; height: 58px; display: flex; flex-direction: column; align-items: center; gap: 3px; background: #eff0f1; border: 1px solid #d4d6d9; border-radius: 3px; color: #8d949c; padding: 1px 0; }
.navbar hr { width: 12px; margin: 0; border: 0; border-top: 1px solid #cfd2d5; }
.dot { width: 4px; height: 4px; border: 1px solid #a9adb2; border-radius: 50%; align-self: flex-end; }
.dot.last { margin-top: auto; }
.vscroll { width: 11px; display: flex; flex-direction: column; align-items: center; justify-content: space-between; padding: 2px 0; background: #303845; color: #9aa2ad; }
.thumb { width: 4px; height: 11px; border-radius: 1px; background: #566173; }
.thumb.flat { width: 11px; height: 3px; }
.viewbar { display: flex; align-items: center; height: 13px; border-top: 1px solid #9ea4ad; background: #3b4453; color: #aeb5be; padding-right: 1px; }
.scale { width: 45px; color: #dde0e5; }
.vbtn { width: 15px; }
.vbtn:nth-of-type(n + 7) { width: 14px; }
.hscroll { flex: 1; height: 9px; background: #323a47; display: flex; align-items: center; justify-content: center; margin: 0 4px; }

.properties { width: 134px; margin-left: 1px; display: flex; flex-direction: column; background: #3b4453; }
.ptype { display: flex; align-items: center; height: 42px; padding: 0 6px 0 2px; }
.ptype span { flex: 1; padding-left: 3px; }
.thumbbox { width: 41px; height: 39px; border: 1px solid #434d5c; display: flex; align-items: center; justify-content: center; }
.pinst { display: flex; gap: 2px; height: 16px; padding: 0 2px 0 1px; margin-bottom: 2px; }
.inst { width: 63px; justify-content: space-between; border-bottom: 1px solid #68748a; padding: 0 2px; }
.edit { gap: 2px; }
.pbody { flex: 1; display: flex; padding-left: 1px; }
table { border-collapse: collapse; table-layout: fixed; width: 122px; height: 353px; }
.ck { width: 58px; }
.cv { width: 56px; }
.ct { width: 8px; }
td, th { padding: 0; line-height: 9px; white-space: nowrap; text-align: left; font-weight: 400; border-bottom: 1px solid #434d5c; }
th { background: #222933; padding-left: 1px; border-color: #222933; }
th:last-child { padding: 0; }
th svg { margin-left: -3px; }
.key { padding-left: 5px; overflow: hidden; }
.val { border-right: 1px solid #434d5c; }
.val > * { display: block; line-height: 9px; }
.val output { padding-left: 1px; }
.off td { color: #7e8793; }
.val button { display: flex; width: 56px; height: 10px; overflow: hidden; border: 1px solid #647082; }
.val input[type="text"] { width: 56px; height: 11px; border: 1px solid #a39b94; padding-left: 2px; }
.val input[type="checkbox"] { appearance: none; width: 7px; height: 7px; margin-left: 2px; border: 1px solid #8b939e; }
.pscroll { flex: 1; display: flex; flex-direction: column; align-items: center; padding: 2px 0 3px; background: #303845; color: #9aa2ad; }
.track { width: 3px; height: 242px; margin-bottom: auto; border-radius: 1px; background: #4b5668; }
.pfoot { display: flex; align-items: center; gap: 2px; height: 13px; padding: 0 2px; background: #303845; }
.sort { width: 12px; height: 12px; }
.sort.on { background: #2f7fa3; }
.apply { margin-left: auto; width: 41px; height: 11px; border: 1px solid #475164; color: #77808c; }

.status { display: flex; align-items: center; height: 16px; background: #3b4453; border-top: 1px solid #343c4a; padding-left: 1px; white-space: nowrap; color: #dde0e5; }
.worksets { width: 123px; display: flex; justify-content: flex-end; color: #7e8793; }
.count { gap: 1px; color: #9aa2ad; margin: 0 9px 0 6px; }
.count.lit { color: #dde0e5; margin: 0; }
.lists { margin-right: 4px; }
.options { width: 124px; display: flex; align-items: center; justify-content: space-between; color: #8b939e; }
.options select { appearance: none; flex: 1; }
.selection { margin-left: auto; display: flex; gap: 4px; padding-right: 36px; }
</style>
